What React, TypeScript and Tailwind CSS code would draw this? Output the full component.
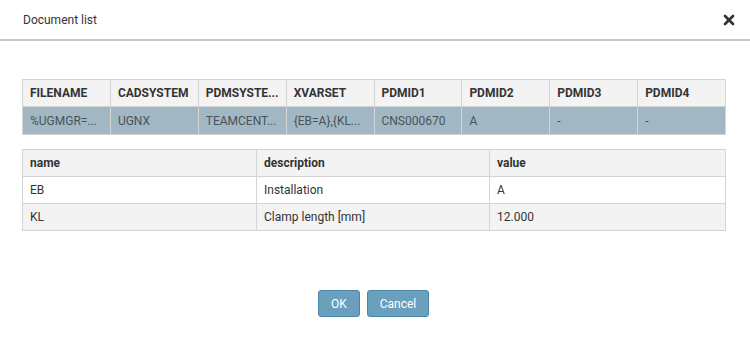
import { X } from "lucide-react";

const docCols = ["FILENAME", "CADSYSTEM", "PDMSYSTE...", "XVARSET", "PDMID1", "PDMID2", "PDMID3", "PDMID4"];
const docRow = ["%UGMGR=...", "UGNX", "TEAMCENT...", "{EB=A},{KL...", "CNS000670", "A", "-", "-"];

const params = [
  { name: "EB", description: "Installation", value: "A" },
  { name: "KL", description: "Clamp length [mm]", value: "12.000" },
];

export default function App() {
  return (
    <div
      className="w-[750px] h-[337px] bg-white text-[#333] flex flex-col"
      style={{ fontFamily: "Roboto, 'Noto Sans', sans-serif" }}
    >
      <div className="h-[41px] flex items-center justify-between pl-[23px] pr-[13px] border-b-2 border-[#c4c8c9]">
        <span className="text-[12px]">Document list</span>
        <X size={16} strokeWidth={4} className="text-[#333]" />
      </div>

      <div className="px-[22px] pt-[38px]">
        <table className="w-[704px] table-fixed border-collapse text-[12px]">
          <thead>
            <tr className="h-[27px] bg-[#f3f3f3]">
              {docCols.map((c) => (
                <th key={c} className="border border-[#d4d4d4] px-[7px] text-left font-bold">
                  {c}
                </th>
              ))}
            </tr>
          </thead>
          <tbody>
            <tr className="h-[28px] bg-[#a1b8c4] text-[#4a5258]">
              {docRow.map((c, i) => (
                <td key={i} className="border border-[#d4d4d4] px-[7px] whitespace-nowrap overflow-hidden">
                  {c}
                </td>
              ))}
            </tr>
          </tbody>
        </table>

        <table className="w-[704px] table-fixed border-collapse text-[12px] mt-[14px]">
          <thead>
            <tr className="h-[27px] bg-[#f3f3f3]">
              <th className="border border-[#d4d4d4] px-[7px] text-left font-bold w-[234px]">name</th>
              <th className="border border-[#d4d4d4] px-[7px] text-left font-bold w-[233px]">description</th>
              <th className="border border-[#d4d4d4] px-[7px] text-left font-bold">value</th>
            </tr>
          </thead>
          <tbody>
            {params.map((p, i) => (
              <tr key={p.name} className={i % 2 === 0 ? "h-[27px] bg-white" : "h-[27px] bg-[#f3f3f3]"}>
                <td className="border border-[#d4d4d4] px-[7px]">{p.name}</td>
                <td className="border border-[#d4d4d4] px-[7px]">{p.description}</td>
                <td className="border border-[#d4d4d4] px-[7px]">{p.value}</td>
              </tr>
            ))}
          </tbody>
        </table>
      </div>

      <div className="flex justify-center gap-[7px] mt-[59px] pr-[3px]">
        <button className="w-[42px] h-[27px] rounded-[3px] bg-[#6a9fbd] border border-[#4d87a8] text-white text-[12px]">
          OK
        </button>
        <button className="w-[62px] h-[27px] rounded-[3px] bg-[#6a9fbd] border border-[#4d87a8] text-white text-[12px]">
          Cancel
        </button>
      </div>
    </div>
  );
}
